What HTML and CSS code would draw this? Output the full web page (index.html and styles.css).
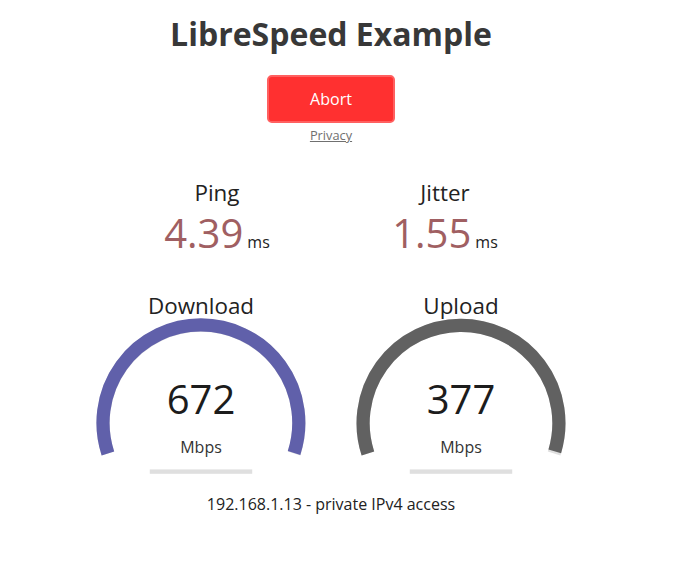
FILE: index.html
```html
<!DOCTYPE html>
<html>
<head>
<meta charset="utf-8">
<title>LibreSpeed Example</title>
<link rel="stylesheet" href="styles.css">
</head>
<body>
<div class="page">
  <h1 class="title">LibreSpeed Example</h1>
  <div class="controls">
    <div class="btn">Abort</div>
    <a class="privacy" href="#">Privacy</a>
  </div>
  <div class="group group-small">
    <div class="area2">
      <div class="name">Ping</div>
      <div class="reading"><span class="val">4.39</span><span class="unit">ms</span></div>
    </div>
    <div class="area2">
      <div class="name">Jitter</div>
      <div class="reading"><span class="val">1.55</span><span class="unit">ms</span></div>
    </div>
  </div>
  <div class="group group-gauge">
    <div class="area">
      <svg class="gauge" viewBox="0 0 256 200" width="256" height="200">
        <path d="M34.9 166.45 A97.9 97.9 0 1 1 221.1 166.45" fill="none" stroke="#80808040" stroke-width="13.2"/>
        <path d="M34.9 166.45 A97.9 97.9 0 1 1 221.05 166.0" fill="none" stroke="#6060AA" stroke-width="13.2"/>
        <rect x="76.8" y="182.4" width="102.4" height="4.4" fill="#80808040"/>
      </svg>
      <div class="name gname">Download</div>
      <div class="meter">672</div>
      <div class="munit">Mbps</div>
    </div>
    <div class="area">
      <svg class="gauge" viewBox="0 0 256 200" width="256" height="200">
        <path d="M34.9 166.45 A97.9 97.9 0 1 1 221.1 166.45" fill="none" stroke="#80808040" stroke-width="13.2"/>
        <path d="M34.9 166.45 A97.9 97.9 0 1 1 221.78 164.3" fill="none" stroke="#616161" stroke-width="13.2"/>
        <rect x="76.8" y="182.4" width="102.4" height="4.4" fill="#80808040"/>
      </svg>
      <div class="name gname">Upload</div>
      <div class="meter">377</div>
      <div class="munit">Mbps</div>
    </div>
  </div>
  <div class="ip">192.168.1.13 - private IPv4 access</div>
</div>
</body>
</html>
```

FILE: styles.css
```css
html, body {
  margin: 0;
  padding: 0;
  background: #ffffff;
}
body {
  font-family: "Open Sans", "Noto Sans", sans-serif;
  color: #333333;
}
.page {
  width: 662px;
  display: flex;
  flex-direction: column;
  align-items: center;
}
.title {
  margin: 14px 0 21px;
  font-size: 32px;
  line-height: 40px;
  font-weight: 700;
  color: #383838;
}
.controls {
  display: flex;
  flex-direction: column;
  align-items: center;
}
.btn {
  box-sizing: border-box;
  width: 128px;
  height: 48px;
  line-height: 45px;
  text-align: center;
  font-size: 16px;
  color: #ffffff;
  background: #FF3030;
  border: 2.4px solid #FF6060;
  border-radius: 4.8px;
}
.privacy {
  margin-top: 3px;
  font-size: 12.8px;
  line-height: 18px;
  color: #707070;
  text-decoration: underline;
}
.group {
  display: flex;
  justify-content: center;
  gap: 4px;
}
.group-small {
  margin-top: 34px;
}
.area2 {
  width: 224px;
  height: 109px;
  display: flex;
  flex-direction: column;
  align-items: center;
}
.name {
  font-size: 22.4px;
  line-height: 30px;
  color: #222222;
}
.reading {
  display: flex;
  align-items: baseline;
  gap: 4px;
  line-height: 50px;
}
.val {
  font-size: 40px;
  color: #A05F62;
}
.unit {
  font-size: 16px;
  color: #222222;
}
.area {
  width: 256px;
  height: 200px;
  display: grid;
  justify-items: center;
}
.area > * {
  grid-area: 1 / 1;
}
.gauge {
  display: block;
}
.gname {
  align-self: start;
  margin-top: 4px;
}
.meter {
  align-self: end;
  margin-bottom: 61px;
  font-size: 40px;
  line-height: 54px;
  color: #1c1c1c;
}
.munit {
  align-self: end;
  margin-bottom: 29px;
  font-size: 16px;
  line-height: 22px;
  color: #333333;
}
.ip {
  margin-top: 6px;
  font-size: 16px;
  line-height: 22px;
  color: #222222;
}
```
